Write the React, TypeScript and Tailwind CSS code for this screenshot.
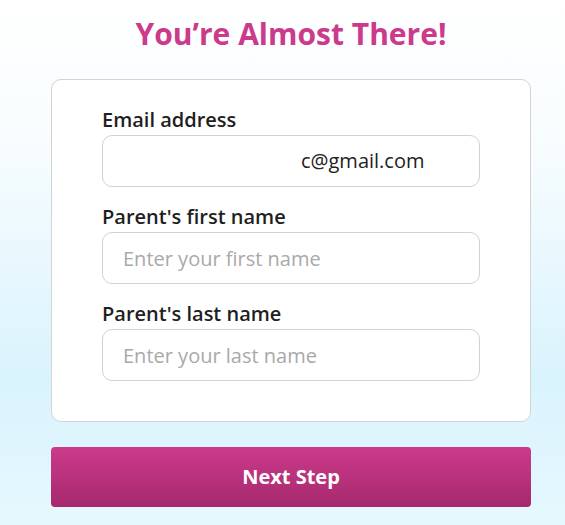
import React from 'react';

const font = { fontFamily: '"Open Sans", "Noto Sans", sans-serif' };

const Field: React.FC<{ label: string; placeholder?: string; value?: string }> = ({ label, placeholder, value }) => (
  <div className="flex flex-col">
    <label className="text-[20px] font-semibold text-[#1f1f1f] leading-[27px] mb-[2px]">{label}</label>
    {value ? (
      <div className="h-[52px] rounded-[10px] border border-[#d2d2d2] bg-white flex items-center pl-[198px] overflow-hidden text-[20px] text-[#222]">
        {value}
      </div>
    ) : (
      <input
        type="text"
        placeholder={placeholder}
        className="h-[52px] rounded-[10px] border border-[#d2d2d2] bg-white px-[20px] text-[20px] text-[#222] placeholder:text-[#a9a9a9] outline-none"
      />
    )}
  </div>
);

export default function App() {
  return (
    <div
      className="w-[565px] h-[525px] overflow-hidden bg-[linear-gradient(to_bottom,#ffffff_0%,#f6fcfe_30%,#d9f3fd_72%,#e6f8fe_100%)]"
      style={font}
    >
      <div className="flex flex-col items-center pt-[13px] pl-[17px]">
        <h1 className="text-[30px] font-bold text-[#cc3a8c] leading-[41px]">You’re Almost There!</h1>
      </div>
      <div className="mx-[51px] mt-[25px] w-[480px] rounded-[10px] border border-[#d4d4d4] bg-white px-[50px] pt-[26px] pb-[40px] flex flex-col gap-[16px]">
        <Field label="Email address" value="c@gmail.com" />
        <Field label="Parent's first name" placeholder="Enter your first name" />
        <Field label="Parent's last name" placeholder="Enter your last name" />
      </div>
      <button className="mx-[51px] mt-[25px] w-[480px] h-[60px] rounded-[4px] bg-[linear-gradient(to_bottom,#cc3a8c,#a5296c)] text-white text-[20px] font-bold">
        Next Step
      </button>
    </div>
  );
}
